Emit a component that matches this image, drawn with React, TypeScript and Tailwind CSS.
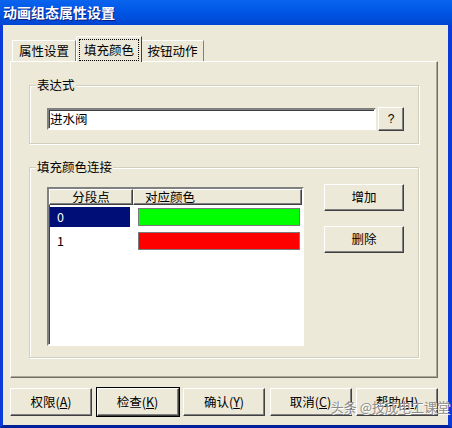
import type { ReactNode } from 'react';

const raised =
  'bg-[#ECE9D8] border border-t-white border-l-white border-r-[#404040] border-b-[#404040] shadow-[inset_-1px_-1px_0_#808080]';

const Button = ({ children, className = '', isDefault = false }: { children: ReactNode; className?: string; isDefault?: boolean }) => (
  <div
    className={`${raised} flex items-center justify-center ${isDefault ? 'outline outline-black' : ''} ${className}`}
  >
    {children}
  </div>
);

const GroupBox = ({ title, className = '', children }: { title: string; className?: string; children: ReactNode }) => (
  <div className={`relative border border-[#D0D0BF] shadow-[inset_1px_1px_0_#fff,1px_1px_0_#fff] ${className}`}>
    <span className="absolute -top-[9px] left-[6px] bg-[#ECE9D8] px-[1px] leading-[16px]">{title}</span>
    {children}
  </div>
);

const rows = [
  { id: '0', color: 'bg-[#00FF00]', selected: true },
  { id: '1', color: 'bg-[#FF0000]', selected: false },
];

const footer = [
  { label: '权限', key: 'A' },
  { label: '检查', key: 'K', isDefault: true },
  { label: '确认', key: 'Y' },
  { label: '取消', key: 'C' },
  { label: '帮助', key: 'H' },
];

const App = () => {
  return (
    <div className="relative flex h-[428px] w-[452px] flex-col overflow-hidden font-['Noto_Sans_CJK_SC',sans-serif] text-[12.5px] text-black">
      <div className="flex h-[25px] shrink-0 items-center bg-gradient-to-b from-[#0A64EE] via-[#0055E5] to-[#0046D2] pl-[3px] text-[14px] font-bold text-white [text-shadow:1px_1px_0_#0A1E80]">
        动画组态属性设置
      </div>

      <div className="flex flex-1 flex-col border-b-[3px] border-l-[3px] border-r-[4px] border-[#0A3BD8] border-b-[#00209A] bg-[#ECE9D8] pl-[7px] pr-[10px] pt-[11px]">
        {/* tabs */}
        <div className="relative z-10 flex h-[25px] items-end">
          <div className="ml-[2px] flex h-[21px] w-[64px] items-center justify-center border border-b-0 border-l-white border-r-[#808080] border-t-white">
            属性设置
          </div>
          <div className="-mb-px flex h-[26px] w-[66px] border border-b-0 border-l-white border-r-[#404040] border-t-white bg-[#ECE9D8] px-[2px] pb-[1px] pt-[2px]">
            <div className="flex flex-1 items-center justify-center border border-dotted border-black">填充颜色</div>
          </div>
          <div className="flex h-[21px] w-[62px] items-center justify-center border border-b-0 border-l-0 border-r-[#808080] border-t-white">
            按钮动作
          </div>
        </div>

        {/* panel */}
        <div className="flex h-[317px] flex-col border border-b-[#716F64] border-l-white border-r-[#716F64] border-t-white px-[18px] pt-[23px] shadow-[inset_-1px_-1px_0_#ACA899]">
          <GroupBox title="表达式" className="h-[59px]">
            <div className="flex items-center pl-[17px] pt-[21px]">
              <div className="flex h-[22px] w-[329px] items-center border-2 border-b-white border-l-[#808080] border-r-white border-t-[#808080] bg-white pl-[1px] shadow-[inset_1px_1px_0_#404040]">
                进水阀
              </div>
              <Button className="ml-[2px] h-[24px] w-[26px] text-[12px] font-['Liberation_Sans',sans-serif]">?</Button>
            </div>
          </GroupBox>

          <GroupBox title="填充颜色连接" className="mt-[23px] h-[191px]">
            <div className="flex items-start pl-[17px] pt-[19px]">
              <div className="h-[159px] w-[257px] border-2 border-b-white border-l-[#808080] border-r-white border-t-[#808080] bg-white shadow-[inset_1px_1px_0_#404040]">
                <div className="flex h-[16px] leading-[14px]">
                  <div className={`${raised} w-[84px] text-center`}>分段点</div>
                  <div className={`${raised} w-[169px] pl-[11px]`}>对应颜色</div>
                </div>
                {rows.map((row) => (
                  <div key={row.id} className="flex h-[24px] items-center">
                    <div className="w-[84px] pl-[1px]">
                      <div className={`flex h-[20px] w-[80px] items-center pl-[7px] ${row.selected ? 'bg-[#000E78] text-white' : ''}`}>
                        {row.id}
                      </div>
                    </div>
                    <div className={`ml-[5px] h-[18px] w-[162px] border border-[#7A7A7A] ${row.color}`} />
                  </div>
                ))}
              </div>
              <div className="-mt-[3px] ml-[20px] flex flex-col gap-[15px]">
                <Button className="h-[27px] w-[80px]">增加</Button>
                <Button className="h-[27px] w-[80px]">删除</Button>
              </div>
            </div>
          </GroupBox>
        </div>

        {/* footer */}
        <div className="mt-[10px] flex justify-between">
          {footer.map((b) => (
            <Button key={b.key} isDefault={b.isDefault} className="h-[28px] w-[82px]">
              {b.label}(<span className="underline">{b.key}</span>)
            </Button>
          ))}
        </div>
      </div>

      <div className="absolute bottom-[12px] right-[2px] text-[13px] text-[#8C8C8C] [text-shadow:1px_1px_0_#fff]">
        头条 @技成电工课堂
      </div>
    </div>
  );
};

export default App;
